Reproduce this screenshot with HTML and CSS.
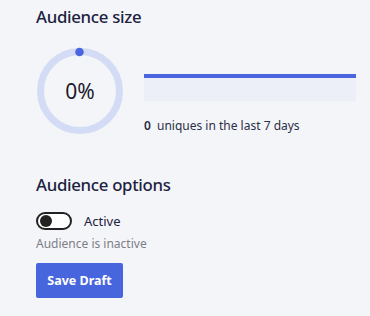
FILE: index.html
```html
<!DOCTYPE html>
<html lang="en">
<head>
<meta charset="utf-8">
<link rel="stylesheet" href="styles.css">
</head>
<body>
<main class="panel">
  <section class="size">
    <h2 class="title">Audience size</h2>
    <div class="size-row">
      <div class="gauge">
        <svg class="gauge-svg" width="88" height="88" viewBox="0 0 88 88">
          <circle cx="44" cy="44" r="39.5" fill="none" stroke="#d3dcf4" stroke-width="7"/>
          <circle cx="43.5" cy="5" r="4.3" fill="#4a65dd"/>
        </svg>
        <span class="gauge-value">0%</span>
      </div>
      <div class="stats">
        <div class="bar"></div>
        <p class="uniques"><b class="num">0</b> uniques in the last 7 days</p>
      </div>
    </div>
  </section>
  <section class="options">
    <h2 class="title">Audience options</h2>
    <div class="toggle-row">
      <span class="switch"><span class="knob"></span></span>
      <span class="toggle-label">Active</span>
    </div>
    <p class="hint">Audience is inactive</p>
    <button class="btn">Save Draft</button>
  </section>
</main>
</body>
</html>
```

FILE: styles.css
```css
* { box-sizing: border-box; }
html, body { margin: 0; background: #f4f5f9; }
body {
  font-family: "Noto Sans", "Open Sans", sans-serif;
  color: #1d2240;
}
.panel { padding: 5px 0 0 36px; }
.title {
  margin: 0;
  font-size: 16.8px;
  font-weight: 500;
  letter-spacing: -0.3px;
  line-height: 24px;
  color: #1d2240;
}
.size-row {
  display: flex;
  gap: 20px;
  margin-top: 18px;
}
.gauge {
  position: relative;
  width: 88px;
  height: 88px;
  flex: none;
}
.gauge-svg { display: block; }
.gauge-value {
  position: absolute;
  inset: 0;
  display: flex;
  align-items: center;
  justify-content: center;
  font-size: 21px;
  font-weight: 400;
  color: #1a1a2a;
}
.stats {
  width: 212px;
  margin-top: 27px;
}
.bar {
  height: 27px;
  border-top: 4px solid #4a65dd;
  background: #eceff8;
}
.uniques {
  margin: 17px 0 0;
  font-size: 12px;
  line-height: 16px;
  color: #2a2f45;
}
.num { font-weight: 600; margin-right: 3px; }
.options { margin-top: 38px; }
.toggle-row {
  display: flex;
  align-items: center;
  gap: 12px;
  margin-top: 15px;
}
.switch {
  width: 36px;
  height: 18px;
  border: 2px solid #222;
  border-radius: 9px;
  background: #fff;
  display: flex;
  align-items: center;
  padding-left: 2px;
}
.knob {
  width: 12px;
  height: 12px;
  border-radius: 50%;
  background: #222;
}
.toggle-label { font-size: 13px; color: #1d2240; }
.hint {
  margin: 6px 0 0;
  font-size: 12px;
  line-height: 16px;
  color: #7d7d85;
}
.btn {
  display: block;
  margin-top: 11px;
  width: 87px;
  height: 35px;
  border: none;
  border-radius: 2px;
  background: #4766dd;
  color: #fff;
  font-family: inherit;
  font-size: 12.5px;
  font-weight: 700;
  padding: 0;
}
```
